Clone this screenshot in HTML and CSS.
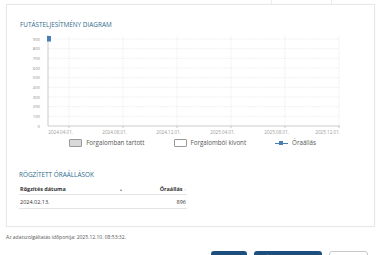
FILE: index.html
```html
<!DOCTYPE html>
<html lang="hu">
<head>
    <meta charset="UTF-8">
    <meta name="viewport" content="width=device-width, initial-scale=1.0">
    <title>Futásteljesítmény</title>
    <link rel="stylesheet" href="styles.css">
</head>
<body>
    <div class="prev-table">
        <div class="prev-cell wide"></div>
        <div class="prev-cell mid"></div>
        <div class="prev-cell narrow"></div>
    </div>

    <div class="card">
        <h2 class="card-title">Futásteljesítmény diagram</h2>

        <svg class="chart" width="330" height="103" viewBox="0 0 330 103">
            <!-- horizontal grid -->
            <g class="grid">
                <line x1="28" y1="6" x2="319" y2="6"/>
                <line x1="28" y1="15.7" x2="319" y2="15.7"/>
                <line x1="28" y1="25.3" x2="319" y2="25.3"/>
                <line x1="28" y1="35" x2="319" y2="35"/>
                <line x1="28" y1="44.7" x2="319" y2="44.7"/>
                <line x1="28" y1="54.3" x2="319" y2="54.3"/>
                <line x1="28" y1="64" x2="319" y2="64"/>
                <line x1="28" y1="73.7" x2="319" y2="73.7"/>
                <line x1="28" y1="83.3" x2="319" y2="83.3"/>
                <line x1="49" y1="3" x2="49" y2="93"/>
                <line x1="103" y1="3" x2="103" y2="93"/>
                <line x1="157" y1="3" x2="157" y2="93"/>
                <line x1="211" y1="3" x2="211" y2="93"/>
                <line x1="265" y1="3" x2="265" y2="93"/>
                <line x1="319" y1="3" x2="319" y2="93"/>
            </g>
            <!-- axes -->
            <g class="axis">
                <line x1="28" y1="2" x2="28" y2="93"/>
                <line x1="28" y1="93" x2="320" y2="93"/>
                <line x1="49" y1="93" x2="49" y2="95"/>
                <line x1="103" y1="93" x2="103" y2="95"/>
                <line x1="157" y1="93" x2="157" y2="95"/>
                <line x1="211" y1="93" x2="211" y2="95"/>
                <line x1="265" y1="93" x2="265" y2="95"/>
                <line x1="319" y1="93" x2="319" y2="95"/>
            </g>
            <g class="y-labels">
                <text x="20" y="7.5">900</text>
                <text x="20" y="17.2">800</text>
                <text x="20" y="26.8">700</text>
                <text x="20" y="36.5">600</text>
                <text x="20" y="46.2">500</text>
                <text x="20" y="55.8">400</text>
                <text x="20" y="65.5">300</text>
                <text x="20" y="75.2">200</text>
                <text x="20" y="84.8">100</text>
                <text x="20" y="94.5">0</text>
            </g>
            <g class="x-labels">
                <text x="53" y="100.5">2024.04.01.</text>
                <text x="107" y="100.5">2024.08.01.</text>
                <text x="161" y="100.5">2024.12.01.</text>
                <text x="215" y="100.5">2025.04.01.</text>
                <text x="269" y="100.5">2025.08.01.</text>
                <text x="320" y="100.5">2025.12.01.</text>
            </g>
            <!-- data point 2024.02.13. = 896 -->
            <rect class="point" x="27" y="3" width="4" height="5.5"/>
        </svg>

        <div class="legend">
            <div class="legend-item"><span class="swatch in-use"></span>Forgalomban tartott</div>
            <div class="legend-item"><span class="swatch removed"></span>Forgalomból kivont</div>
            <div class="legend-item"><span class="line-mark"><span class="dot"></span></span>Óraállás</div>
        </div>

        <h2 class="card-title section">Rögzített óraállások</h2>

        <table class="readings">
            <thead>
                <tr>
                    <th>Rögzítés dátuma <span class="sort">▲</span></th>
                    <th class="num">Óraállás <span class="sort-both">↕</span></th>
                </tr>
            </thead>
            <tbody>
                <tr>
                    <td>2024.02.13.</td>
                    <td class="num">896</td>
                </tr>
            </tbody>
        </table>
    </div>

    <p class="timestamp">Az adatszolgáltatás időpontja: 2025.12.10. 08:53:32.</p>

    <div class="actions">
        <button class="btn primary small">Vissza</button>
        <button class="btn primary">Óraállás rögzítése</button>
        <button class="btn outline">Bezárás</button>
    </div>
</body>
</html>
```

FILE: styles.css
```css
body {
    margin: 0;
    font-family: "Open Sans", "Liberation Sans", sans-serif;
    background-color: #fff;
    color: #333;
    overflow: hidden;
}

.prev-table {
    display: flex;
    height: 4px;
    margin: 0 7px 0 6px;
}

.prev-cell.wide {
    flex: 1;
}

.prev-cell.mid {
    width: 59px;
    border-left: 1px solid #ececec;
}

.prev-cell.narrow {
    width: 43px;
    border-left: 1px solid #ececec;
}

.card {
    margin: 0 7px 0 6px;
    border: 1px solid #e8e8e8;
    box-shadow: 0 0 2px rgba(0, 0, 0, 0.04);
    padding: 15px 13px 17px 13px;
}

.card-title {
    margin: 0;
    font-size: 6.4px;
    line-height: 10px;
    font-weight: 400;
    text-transform: uppercase;
    color: #2f6a8c;
}

.card-title.section {
    margin-top: 23px;
    margin-left: -1px;
}

.chart {
    display: block;
    margin-top: 3px;
}

.grid line {
    stroke: #e0e0e0;
    stroke-width: 0.6;
    stroke-dasharray: 1.2 1;
}

.axis line {
    stroke: #b5b5b5;
    stroke-width: 0.7;
}

.y-labels text {
    font-size: 4.2px;
    fill: #8a8a8a;
    text-anchor: end;
}

.x-labels text {
    font-size: 4.6px;
    fill: #9a9a9a;
    text-anchor: end;
}

.point {
    fill: #4a7db3;
}

.legend {
    display: flex;
    justify-content: center;
    gap: 29px;
    margin-top: 3px;
    margin-left: 4px;
    height: 8px;
    font-size: 6.2px;
    line-height: 8px;
    color: #555;
}

.legend-item {
    display: flex;
    align-items: center;
}

.swatch {
    display: inline-block;
    width: 11px;
    height: 6px;
    margin-right: 4px;
    border: 1px solid #999;
    border-radius: 1px;
}

.swatch.in-use {
    background-color: #d9d9d9;
}

.swatch.removed {
    background-color: #fff;
}

.line-mark {
    position: relative;
    display: inline-block;
    width: 13px;
    height: 1px;
    margin-right: 4px;
    background-color: #4a7db3;
}

.line-mark .dot {
    position: absolute;
    left: 4px;
    top: -1.5px;
    width: 4px;
    height: 4px;
    background-color: #4a7db3;
}

.readings {
    width: 168px;
    margin-top: 3px;
    margin-left: -1px;
    border-collapse: collapse;
    font-size: 5.5px;
}

.readings th {
    height: 11px;
    padding: 0 1px;
    text-align: left;
    font-weight: 700;
    color: #333;
    border-bottom: 1px solid #e4e4e4;
}

.readings td {
    height: 13px;
    padding: 0 1px;
    color: #333;
    border-bottom: 1px solid #e4e4e4;
}

.readings .num {
    text-align: right;
}

.sort {
    margin-left: 52px;
    font-size: 3.5px;
    color: #888;
}

.sort-both {
    font-size: 4px;
    color: #aaa;
    font-weight: 400;
}

.timestamp {
    margin: 6px 0 0 6px;
    font-size: 5px;
    line-height: 8px;
    color: #555;
}

.actions {
    display: flex;
    justify-content: flex-end;
    gap: 7px;
    margin-top: 10px;
    padding-right: 14px;
}

.btn {
    height: 14px;
    padding: 0;
    border-radius: 3px;
    font-family: inherit;
    font-size: 5.5px;
    line-height: 14px;
    text-align: center;
    cursor: pointer;
}

.btn.primary {
    width: 68px;
    background-color: #1d4f7e;
    border: none;
    color: #fff;
}

.btn.primary.small {
    width: 36px;
}

.btn.outline {
    width: 39px;
    background-color: #fff;
    border: 1px solid #c8c8c8;
    color: #444;
}
```
